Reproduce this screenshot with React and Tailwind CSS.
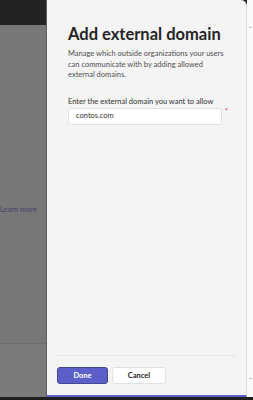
export default function App() {
  return (
    <div
      className="w-[253px] h-[400px] flex flex-col overflow-hidden bg-[#1f1f1f]"
      style={{ fontFamily: 'Lato, "Liberation Sans", sans-serif' }}
    >
      <div className="flex flex-1 min-h-0">
        {/* dimmed page behind the panel */}
        <div className="w-[46px] flex flex-col bg-[#777777]">
          <div className="h-[25px] bg-[#232323]" />
          <div className="flex-1 pt-[180px]">
            <div className="text-[7.5px] leading-[10px] text-[#44446e] whitespace-nowrap">
              Learn more
            </div>
          </div>
          <div className="h-[54px] border-t border-[#6e6e6e] bg-[#7a7a7a]" />
        </div>

        {/* side panel */}
        <div className="w-[201px] flex flex-col bg-[#f4f4f4] rounded-tr-md border-r border-[#dcdcdc] border-l border-l-[#5e5e5e] border-b-[2px] border-b-[#5b5fc7]">
          <div className="flex-1 pl-[21px] pr-[18px] pt-[24px]">
            <h1 className="text-[16.5px] leading-[20px] font-bold text-[#242424] whitespace-nowrap">
              Add external domain
            </h1>
            <p className="mt-[5px] text-[7.5px] leading-[10.5px] text-[#4f4f4f] whitespace-nowrap">
              Manage which outside organizations your users
              <br />
              can communicate with by adding allowed
              <br />
              external domains.
            </p>
            <label className="block mt-[16px] text-[7.5px] leading-[10px] text-[#333333] whitespace-nowrap">
              Enter the external domain you want to allow
            </label>
            <div className="flex items-start mt-[1px]">
              <div className="w-[159px] h-[17px] flex items-center px-[7px] bg-white border border-[#e1e1e1] rounded-[3px] text-[7.5px] text-[#333333]">
                contos.com
              </div>
              <span className="ml-[3px] text-[7px] leading-[7px] text-[#c4314b]">*</span>
            </div>
          </div>
          <div className="mx-[10px] border-t border-[#e6e6e6]" />
          <div className="flex gap-[4px] px-[10px] pt-[11px] pb-[11px]">
            <button className="w-[51px] h-[17px] rounded-[3px] bg-[#5b5fc7] border border-[#444791] text-white text-[7.5px] font-bold">
              Done
            </button>
            <button className="w-[54px] h-[17px] rounded-[3px] bg-white border border-[#e1e1e1] text-[#242424] text-[7.5px] font-bold">
              Cancel
            </button>
          </div>
        </div>

        {/* right edge of page */}
        <div className="flex-1 flex flex-col bg-[#fafafa]">
          <div className="mt-[27px] ml-[2px] w-[3px] h-px bg-[#bdbdbd]" />
          <div className="flex-1" />
          <div className="mb-[18px] ml-[2px] w-[3px] h-px bg-[#bdbdbd]" />
        </div>
      </div>
      <div className="h-[3px] bg-[#1f1f1f]" />
    </div>
  );
}
